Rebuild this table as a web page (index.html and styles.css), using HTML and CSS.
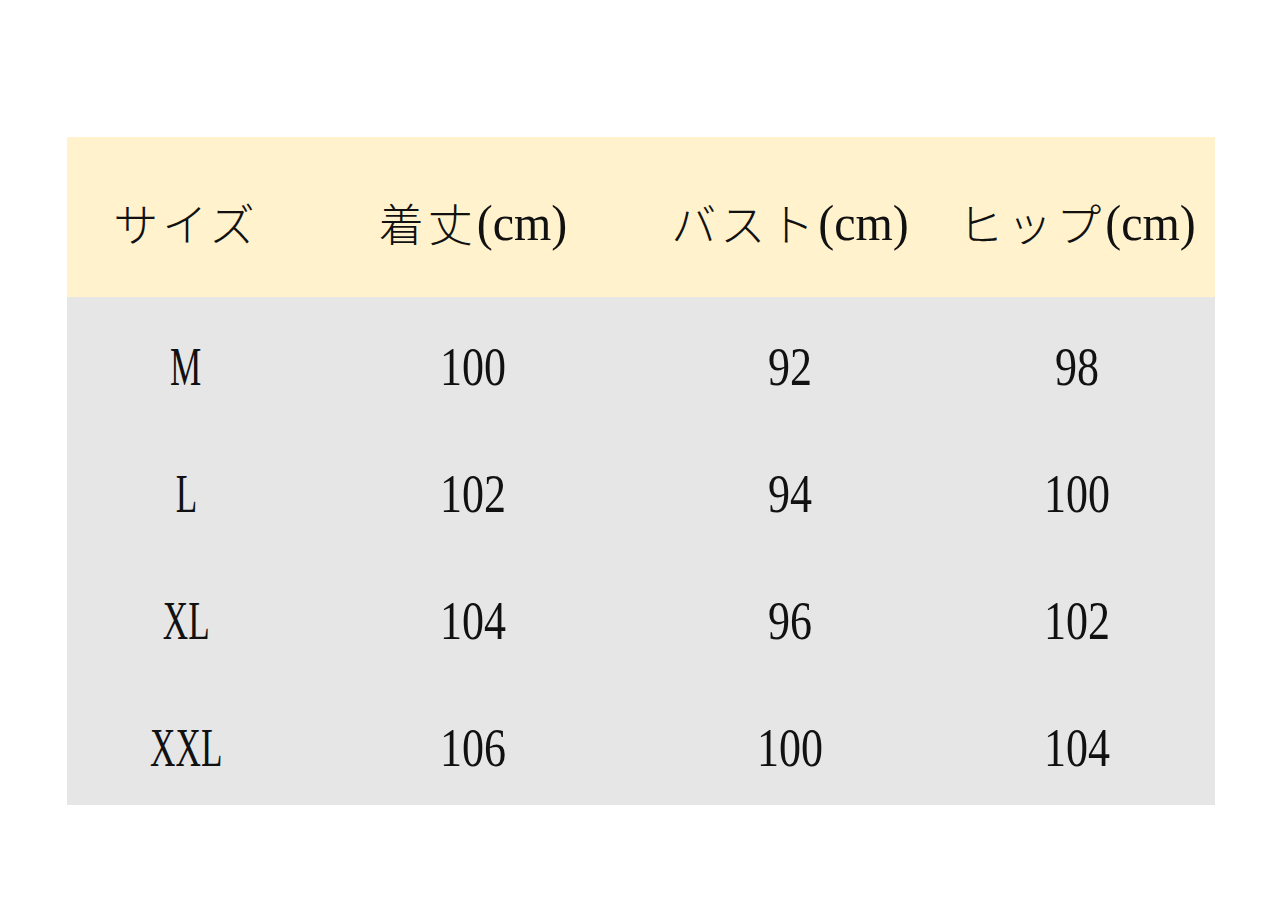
FILE: index.html
```html
<!DOCTYPE html>
<html lang="ja">
<head>
<meta charset="utf-8">
<title>サイズ表</title>
<link rel="stylesheet" href="styles.css">
</head>
<body>
<div class="chart">
  <div class="row head">
    <div class="cell"><span class="jp">サイズ</span></div>
    <div class="cell"><span class="jp">着丈</span><span class="unit">(cm)</span></div>
    <div class="cell"><span class="jp">バスト</span><span class="unit">(cm)</span></div>
    <div class="cell"><span class="jp">ヒップ</span><span class="unit">(cm)</span></div>
  </div>
  <div class="body">
    <div class="row">
      <div class="cell"><span class="size">M</span></div>
      <div class="cell"><span class="num">100</span></div>
      <div class="cell"><span class="num">92</span></div>
      <div class="cell"><span class="num">98</span></div>
    </div>
    <div class="row">
      <div class="cell"><span class="size">L</span></div>
      <div class="cell"><span class="num">102</span></div>
      <div class="cell"><span class="num">94</span></div>
      <div class="cell"><span class="num">100</span></div>
    </div>
    <div class="row">
      <div class="cell"><span class="size">XL</span></div>
      <div class="cell"><span class="num">104</span></div>
      <div class="cell"><span class="num">96</span></div>
      <div class="cell"><span class="num">102</span></div>
    </div>
    <div class="row">
      <div class="cell"><span class="size">XXL</span></div>
      <div class="cell"><span class="num">106</span></div>
      <div class="cell"><span class="num">100</span></div>
      <div class="cell"><span class="num">104</span></div>
    </div>
  </div>
</div>
</body>
</html>
```
FILE: styles.css
```css
html, body {
  margin: 0;
  padding: 0;
  background: #ffffff;
}
body {
  width: 1280px;
  height: 914px;
  overflow: hidden;
  color: #111111;
  font-family: "Liberation Serif", "Noto Sans CJK JP", serif;
}
.chart {
  margin: 137px 0 0 67px;
  width: 1148px;
}
.row {
  display: grid;
  grid-template-columns: 238px 336px 298px 276px;
  height: 127px;
}
.head {
  height: 160px;
  background: #fff2cc;
}
.body {
  background: #e6e6e6;
}
.cell {
  display: flex;
  align-items: center;
  justify-content: center;
  white-space: nowrap;
}
.head .cell {
  padding-top: 10px;
}
.body .cell {
  padding-top: 12px;
}
.jp {
  font-family: "Noto Sans CJK JP", sans-serif;
  font-weight: 300;
  font-size: 45px;
  letter-spacing: 4px;
}
.unit {
  font-family: "Liberation Serif", serif;
  font-size: 48px;
  display: inline-block;
  transform: scaleY(1.05);
}
.num {
  display: inline-block;
  font-size: 44px;
  transform: scaleY(1.27);
}
.size {
  display: inline-block;
  font-size: 44px;
  transform: scale(0.8, 1.27);
}
```
